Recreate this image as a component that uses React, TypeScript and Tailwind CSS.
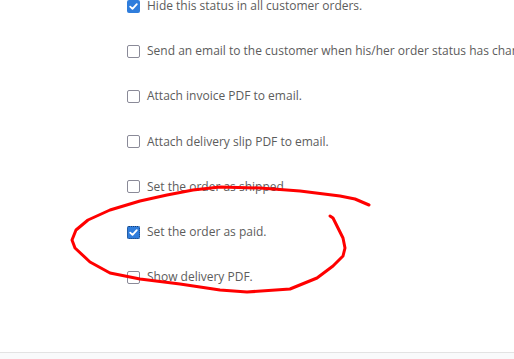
import React from "react";

const rows: { label: string; checked: boolean; focus?: boolean }[] = [
  { label: "Hide this status in all customer orders.", checked: true },
  { label: "Send an email to the customer when his/her order status has changed.", checked: false },
  { label: "Attach invoice PDF to email.", checked: false },
  { label: "Attach delivery slip PDF to email.", checked: false },
  { label: "Set the order as shipped.", checked: false },
  { label: "Set the order as paid.", checked: true, focus: true },
  { label: "Show delivery PDF.", checked: false },
];

function Box({ checked, focus }: { checked: boolean; focus?: boolean }) {
  if (checked) {
    return (
      <span
        className={
          "flex h-[13px] w-[13px] shrink-0 items-center justify-center rounded-[2px] bg-[#2f7ddc] " +
          (focus ? "outline outline-1 outline-dotted outline-[#1a3f70] -outline-offset-1" : "")
        }
      >
        <svg width="11" height="11" viewBox="0 0 11 11" fill="none">
          <path d="M2.2 5.6 L4.5 7.9 L8.8 3.1" stroke="white" strokeWidth="1.8" strokeLinecap="round" strokeLinejoin="round" />
        </svg>
      </span>
    );
  }
  return <span className="block h-[13px] w-[13px] shrink-0 rounded-[2px] border-[1.5px] border-[#8a8a98] bg-white" />;
}

export default function App() {
  const pts = [
    [369, 205], [355, 199], [340, 196], [300, 191], [260, 188], [220, 187], [193, 190], [167, 195],
    [140, 201], [110, 210], [88, 220], [76, 230], [72, 240], [75, 248], [90, 262], [110, 273],
    [140, 279], [180, 284], [220, 290], [247, 292], [290, 289], [317, 278], [333, 266], [343, 256],
    [345, 248], [343, 238], [337, 226], [333, 218], [330, 216],
  ];
  const d = "M" + pts.map((p) => p.join(",")).join(" L");
  return (
    <div className="relative flex h-[359px] w-[514px] flex-col overflow-hidden bg-white font-['Open_Sans',sans-serif]">
      <div className="flex flex-1 flex-col pl-[127px] pt-0">
        <div className="-mt-[16.5px] flex flex-col">
          {rows.map((r, i) => (
            <div key={i} className="flex h-[45.2px] items-center gap-[7px] whitespace-nowrap text-[12px] text-[#5c5c5c]">
              <Box checked={r.checked} focus={r.focus} />
              <span>{r.label}</span>
            </div>
          ))}
        </div>
      </div>
      <div className="h-[7px] border-t border-[#e3e3e3] bg-[#f9fafb]" />
      <svg className="pointer-events-none absolute left-0 top-0" width="514" height="359" viewBox="0 0 514 359">
        <path d={d} fill="none" stroke="#ff0000" strokeWidth="3" strokeLinecap="round" strokeLinejoin="round" />
      </svg>
    </div>
  );
}
